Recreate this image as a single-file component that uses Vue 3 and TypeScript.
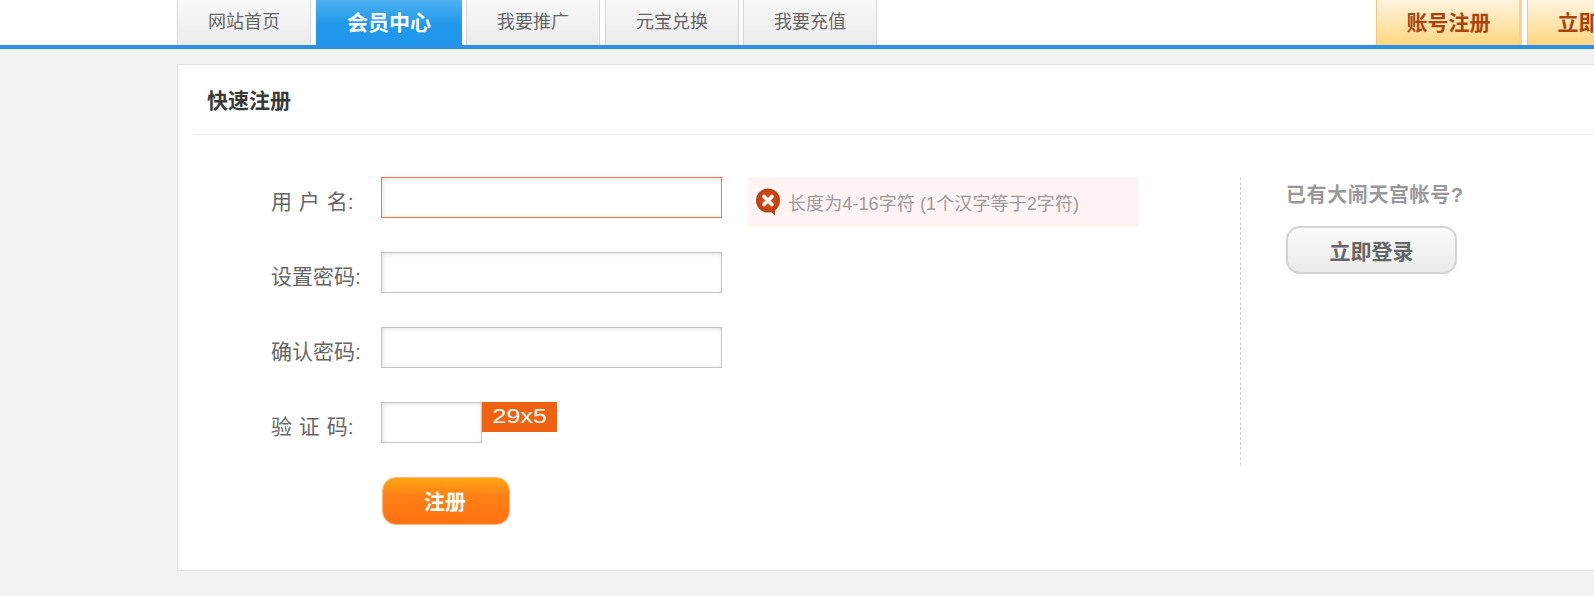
<script setup lang="ts">
const tabs: { name: string; active?: boolean }[] = [
  { name: "网站首页" },
  { name: "会员中心", active: true },
  { name: "我要推广" },
  { name: "元宝兑换" },
  { name: "我要充值" },
];

const actions: string[] = ["账号注册", "立即登录"];

const fields: { label: string; error?: boolean; tip?: string }[] = [
  { label: "用 户 名:", error: true, tip: "长度为4-16字符 (1个汉字等于2字符)" },
  { label: "设置密码:" },
  { label: "确认密码:" },
];
</script>

<template>
  <div class="page">
    <div class="header">
      <div class="nav">
        <a v-for="tab in tabs" :key="tab.name" class="tab" :class="{ active: tab.active }">{{ tab.name }}</a>
        <div class="actions">
          <a v-for="item in actions" :key="item" class="action">{{ item }}</a>
        </div>
      </div>
    </div>

    <div class="card">
      <h2 class="card-title">快速注册</h2>
      <div class="card-body">
        <form class="form" @submit.prevent>
          <div v-for="field in fields" :key="field.label" class="row">
            <label class="label">{{ field.label }}</label>
            <input class="input" :class="{ error: field.error }" type="text" />
            <div v-if="field.tip" class="tip">
              <svg class="tip-icon" width="26" height="28" viewBox="0 0 26 28">
                <defs>
                  <radialGradient id="errorFill" cx="50%" cy="50%" r="55%">
                    <stop offset="0%" stop-color="#e65a22" />
                    <stop offset="100%" stop-color="#b8390b" />
                  </radialGradient>
                </defs>
                <path d="M15 23l5 4.5V20z" fill="#b8390b" />
                <circle cx="13" cy="12.5" r="12" fill="url(#errorFill)" />
                <path d="M9 8.5l8 8M17 8.5l-8 8" stroke="#fff" stroke-width="3.6" stroke-linecap="round" />
              </svg>
              <span>{{ field.tip }}</span>
            </div>
          </div>

          <div class="row">
            <label class="label">验 证 码:</label>
            <input class="input input-code" type="text" />
            <span class="captcha"><span class="captcha-text">29x5</span></span>
          </div>

          <button class="submit" type="button">注册</button>
        </form>

        <aside class="side">
          <p class="side-title">已有大闹天宫帐号?</p>
          <button class="login" type="button">立即登录</button>
        </aside>
      </div>
    </div>
  </div>
</template>

<style scoped>
.page {
  width: 1594px;
  height: 596px;
  overflow: hidden;
  background: #f2f2f2;
  font-family: "Liberation Sans", "Noto Sans CJK SC", sans-serif;
}

.header {
  background: #fff;
  border-bottom: 4px solid #2e8fe6;
  padding-left: 177px;
}

.nav {
  width: 1496px;
  height: 45px;
  display: flex;
}

.tab {
  width: 134px;
  height: 45px;
  margin-right: 5px;
  box-sizing: border-box;
  border: 1px solid #d6d6d6;
  border-width: 0 1px;
  background: linear-gradient(#f9f9f9, #ebebeb);
  color: #666;
  font-size: 18px;
  line-height: 45px;
  text-align: center;
}

.tab:nth-child(4) {
  margin-right: 4px;
}

.tab.active {
  width: 146px;
  margin-right: 4px;
  border: 0;
  background: linear-gradient(#4db1f0, #2097ea 55%);
  color: #fff;
  font-size: 21px;
  font-weight: bold;
}

.actions {
  margin-left: auto;
  display: flex;
  gap: 5px;
}

.action {
  width: 146px;
  height: 45px;
  padding-left: 1px;
  box-sizing: border-box;
  border-left: 1px solid #f9c877;
  border-right: 3px solid #fbd092;
  background: linear-gradient(#fff4e0, #ffd680);
  color: #a8450e;
  font-size: 21px;
  font-weight: bold;
  line-height: 45px;
  text-align: center;
}

.card {
  width: 1500px;
  height: 507px;
  margin: 15px 0 0 177px;
  box-sizing: border-box;
  border: 1px solid #e3e3e3;
  background: #fff;
}

.card-title {
  margin: 0 0 0 15px;
  height: 69px;
  padding-left: 14px;
  border-bottom: 1px solid #eee;
  color: #3a3a3a;
  font-size: 21px;
  font-weight: bold;
  line-height: 71px;
}

.card-body {
  display: flex;
  align-items: flex-start;
  padding-top: 42px;
}

.form {
  width: 1062px;
  flex-shrink: 0;
}

.row {
  height: 41px;
  margin-bottom: 34px;
  display: flex;
  align-items: flex-start;
}

.label {
  width: 203px;
  box-sizing: border-box;
  padding-left: 93px;
  flex-shrink: 0;
  color: #666;
  font-size: 21px;
  word-spacing: 1px;
  line-height: 50px;
  white-space: nowrap;
}

.input {
  width: 341px;
  height: 41px;
  box-sizing: border-box;
  border: 1px solid #c4c4c4;
  box-shadow: inset 1px 1px 4px rgba(0, 0, 0, 0.12);
  outline: none;
  padding: 0 8px;
  background: #fff;
}

.input.error {
  border-color: #ff7550;
}

.input-code {
  width: 101px;
}

.captcha {
  width: 75px;
  height: 30px;
  background: #ee6211;
  color: #fff;
  font-size: 20px;
  line-height: 29px;
  text-align: center;
}

.captcha-text {
  display: inline-block;
  transform: scaleX(1.25);
}

.tip {
  width: 390px;
  height: 50px;
  margin-left: 26px;
  padding-left: 7px;
  box-sizing: border-box;
  flex-shrink: 0;
  display: flex;
  align-items: center;
  background: #fff4f3;
  color: #9b9b9b;
  font-size: 18px;
  letter-spacing: 0.1px;
  white-space: nowrap;
}

.tip-icon {
  margin-right: 7px;
  flex-shrink: 0;
}

.submit {
  display: block;
  width: 128px;
  height: 48px;
  margin-left: 204px;
  padding: 0 8px 2px 6px;
  border: 1px solid #ffb27a;
  border-radius: 14px;
  background: linear-gradient(#ffa613, #ff7f16 40%, #ff7212);
  color: #fff;
  font-family: inherit;
  font-size: 21px;
  font-weight: bold;
}

.side {
  height: 288px;
  padding-left: 45px;
  border-left: 1px dashed #ccc;
  flex-shrink: 0;
}

.side-title {
  margin: 6px 0 0;
  color: #999;
  font-size: 20px;
  font-weight: bold;
  letter-spacing: 0.6px;
  line-height: 24px;
}

.login {
  display: block;
  width: 171px;
  height: 48px;
  margin-top: 19px;
  border: 2px solid #d4d4d4;
  border-radius: 14px;
  background: linear-gradient(#fbfbfb, #ebebeb);
  color: #666;
  font-family: inherit;
  font-size: 21px;
  font-weight: bold;
}
</style>

<style>
html,
body {
  overflow: hidden;
}
</style>
